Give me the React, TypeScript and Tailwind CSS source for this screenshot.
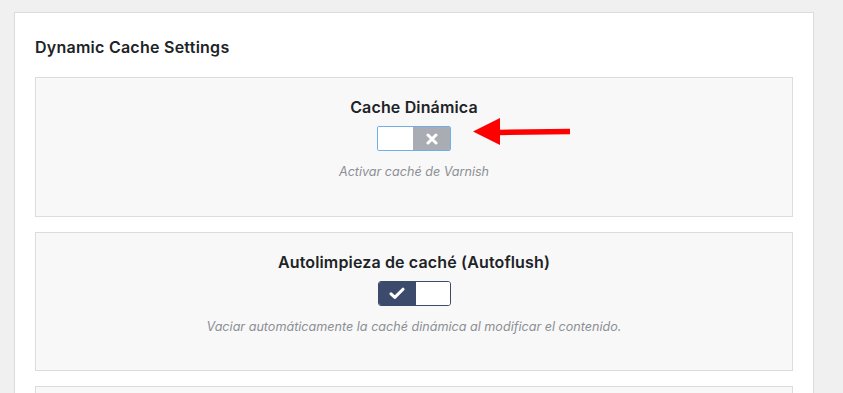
import React from 'react';

type Setting = {
  title: string;
  description: string;
  enabled: boolean;
  focused?: boolean;
};

const settings: Setting[] = [
  { title: 'Cache Dinámica', description: 'Activar caché de Varnish', enabled: false, focused: true },
  {
    title: 'Autolimpieza de caché (Autoflush)',
    description: 'Vaciar automáticamente la caché dinámica al modificar el contenido.',
    enabled: true,
  },
];

function Toggle({ enabled, focused }: { enabled: boolean; focused?: boolean }) {
  if (enabled) {
    return (
      <div className="mt-[9px] flex h-[25px] w-[73px] overflow-hidden rounded-[3px] border border-[#3c4a6b]">
        <div className="flex w-[37px] items-center justify-center bg-[#3c4a6b]">
          <svg width="16" height="13" viewBox="0 0 16 13" fill="none">
            <path d="M2 6.8 L5.8 10.4 L14 2.2" stroke="#fff" strokeWidth="3" strokeLinecap="round" strokeLinejoin="round" />
          </svg>
        </div>
        <div className="flex-1 bg-white" />
      </div>
    );
  }
  return (
    <div
      className={
        focused
          ? 'mt-[9px] flex h-[25px] w-[74px] overflow-hidden rounded-[2px] border border-[#72aee6]'
          : 'mt-[9px] flex h-[25px] w-[74px] overflow-hidden rounded-[2px] border border-[#a7aaad]'
      }
    >
      <div className="w-[35px] bg-white" />
      <div className="flex flex-1 items-center justify-center bg-[#a9acb2]">
        <svg width="12" height="12" viewBox="0 0 12 12" fill="none">
          <path d="M2 2 L10 10 M10 2 L2 10" stroke="#fff" strokeWidth="3" strokeLinecap="round" />
        </svg>
      </div>
    </div>
  );
}

function Arrow() {
  return (
    <svg className="absolute left-[436px] top-[39px]" width="100" height="30" viewBox="0 0 100 30">
      <polygon points="1,14.5 28,1 28,28" fill="#ff0000" />
      <path d="M26 15.5 L98 14.5" stroke="#ff0000" strokeWidth="5.5" />
    </svg>
  );
}

export default function App() {
  return (
    <div className="min-h-[393px] overflow-hidden bg-[#f0f0f1] pl-[14px] pt-[12px] font-['Inter',sans-serif] text-[#1d2327]">
      <div className="w-[800px] border border-[#dcdcde] bg-white px-[20px] pt-[24px] pb-[20px]">
        <h2 className="text-[16px] leading-[20px] font-semibold tracking-[0.25px]">Dynamic Cache Settings</h2>
        <div className="mt-[20px] flex flex-col gap-[15px]">
          {settings.map((s, i) => (
            <div
              key={s.title}
              className={
                i === 0
                  ? 'relative flex flex-col items-center border border-[#dcdcde] bg-[#f8f8f8] pt-[19px] pb-[35px]'
                  : 'relative flex flex-col items-center border border-[#dcdcde] bg-[#f8f8f8] pt-[19px] pb-[34px]'
              }
            >
              <h3 className="text-[16px] leading-[20px] font-semibold tracking-[0.15px]">{s.title}</h3>
              <Toggle enabled={s.enabled} focused={s.focused} />
              <p className="mt-[12px] text-[12.6px] leading-[18px] italic text-[#8c8f94]">{s.description}</p>
              {i === 0 && <Arrow />}
            </div>
          ))}
          <div className="h-[80px] border border-[#dcdcde] bg-[#f8f8f8]" />
        </div>
      </div>
    </div>
  );
}
